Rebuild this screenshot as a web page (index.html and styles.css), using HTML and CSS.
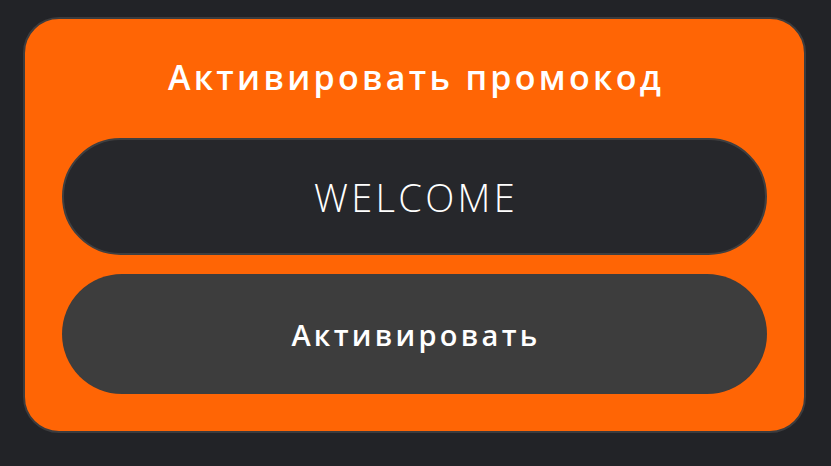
FILE: index.html
```html
<!DOCTYPE html>
<html lang="ru">
<head>
<meta charset="utf-8">
<link rel="stylesheet" href="styles.css">
</head>
<body>
<div class="card">
  <h1 class="title">Активировать промокод</h1>
  <input class="code" type="text" value="WELCOME">
  <button class="activate">Активировать</button>
</div>
</body>
</html>
```
FILE: styles.css
```css
* { box-sizing: border-box; }
html, body { margin: 0; padding: 0; }
body {
  background: #222327;
  width: 831px;
  height: 466px;
  padding: 17px 0 0 23px;
  font-family: "Open Sans", "Liberation Sans", sans-serif;
}
.card {
  width: 783px;
  height: 416px;
  background: #ff6505;
  border: 2px solid #3c3c3e;
  border-radius: 36px;
  padding: 0 37px;
  display: flex;
  flex-direction: column;
}
.title {
  margin: 38px 0 41px;
  height: 40px;
  line-height: 40px;
  text-align: center;
  color: #fff;
  font-size: 34px;
  font-weight: 600;
  letter-spacing: 3.3px;
  padding-left: 3px;
}
.code {
  height: 117px;
  width: 100%;
  border-radius: 60px;
  background: #26272b;
  border: 2px solid #3f3f40;
  color: #fff;
  text-align: center;
  font-family: "Open Sans", "Liberation Sans", sans-serif;
  font-size: 38px;
  font-weight: 300;
  letter-spacing: 3.3px;
  outline: none;
  padding: 0 0 0 3px;
}
.activate {
  margin-top: 19px;
  height: 120px;
  width: 100%;
  border: none;
  border-radius: 60px;
  background: #3d3d3d;
  color: #fff;
  font-family: "Open Sans", "Liberation Sans", sans-serif;
  font-size: 29px;
  font-weight: 600;
  letter-spacing: 3.3px;
  padding: 0 0 0 3px;
}
```
